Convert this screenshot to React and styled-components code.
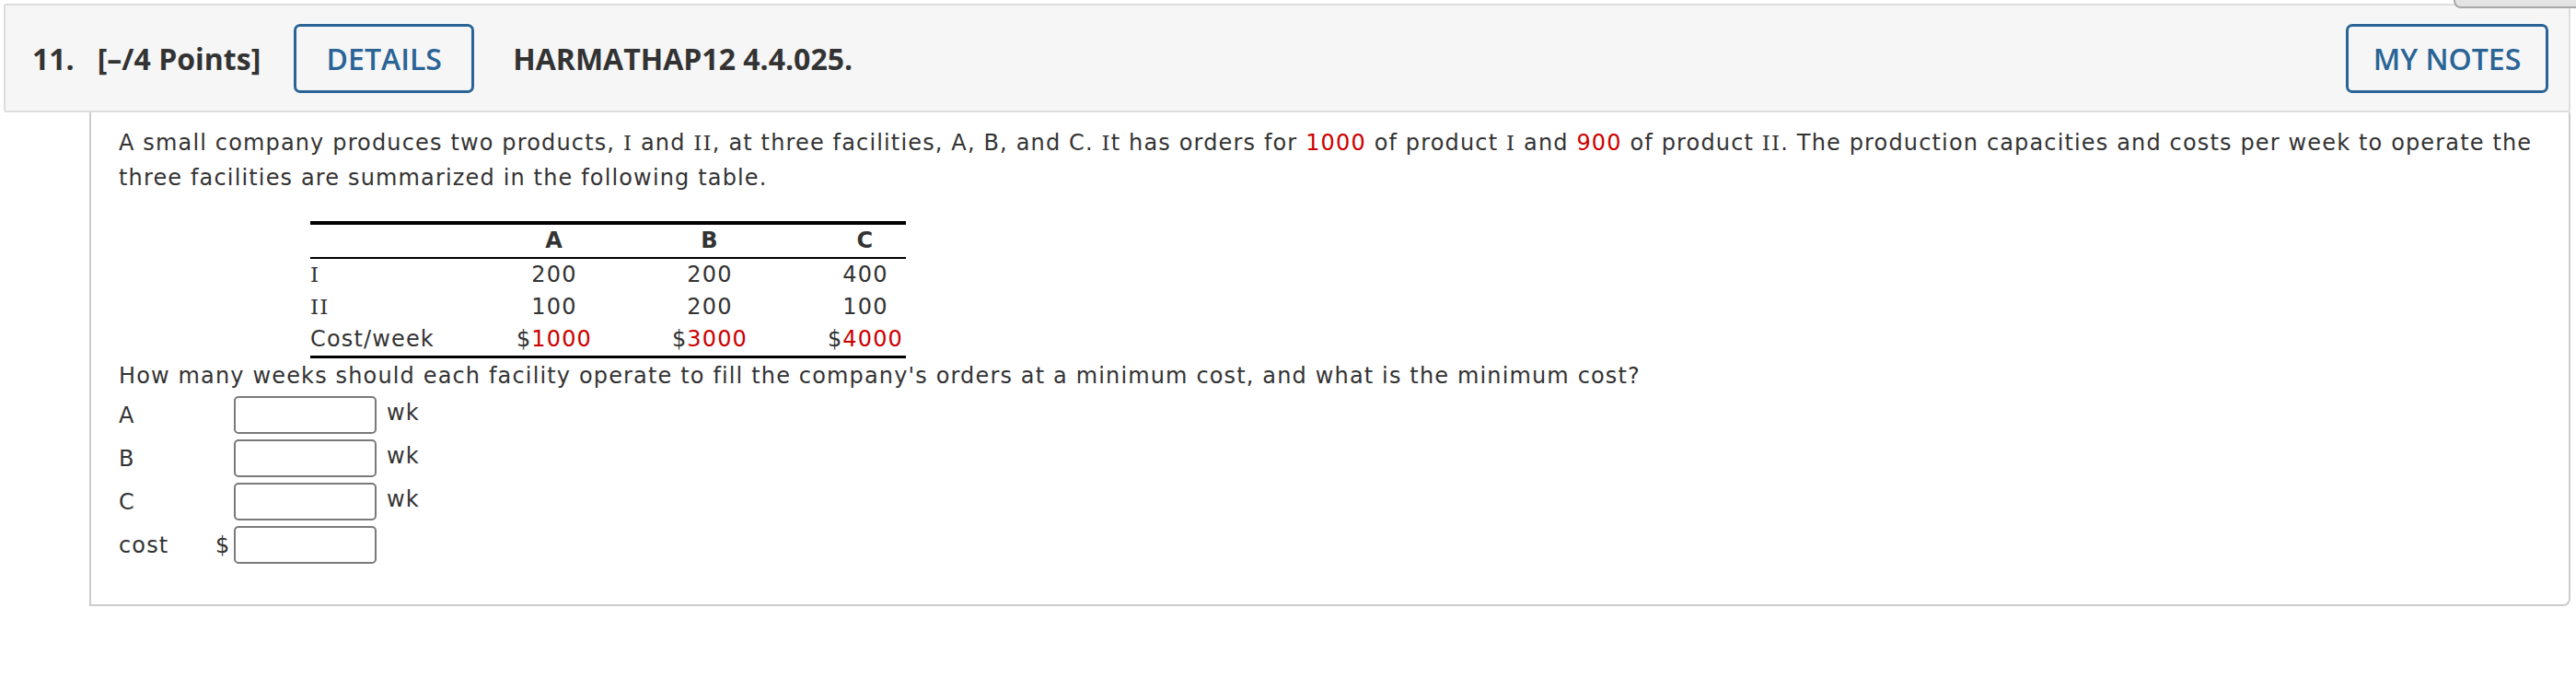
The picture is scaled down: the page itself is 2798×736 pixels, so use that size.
import React from 'react';
import styled, { createGlobalStyle } from 'styled-components';

const GlobalStyle = createGlobalStyle`
  body {
    margin: 0;
    background: #ffffff;
  }
`

const Page = styled.div`
  position: relative;
  width: 2798px;
  padding: 4px 6px 0 4px;
  box-sizing: border-box;
`

const BackTab = styled.div`
  position: absolute;
  top: 0;
  right: 0;
  width: 131px;
  height: 7px;
  background: #e4e4e4;
  border-left: 2px solid #a8a8a8;
  border-bottom: 2px solid #a8a8a8;
  border-bottom-left-radius: 8px;
`

const Header = styled.div`
  display: flex;
  align-items: center;
  height: 118px;
  box-sizing: border-box;
  padding: 0 22px 0 29px;
  background: #f6f6f6;
  border: 2px solid #dddddd;
  border-radius: 3px;
  font-family: "Open Sans", "Liberation Sans", sans-serif;
  font-size: 32px;
  font-weight: 700;
  color: #333333;
`

const Points = styled.span`
  margin-left: 25px;
`

const OutlineButton = styled.div`
  display: flex;
  align-items: center;
  justify-content: center;
  height: 75px;
  box-sizing: border-box;
  width: ${p => p.$width}px;
  margin-left: ${p => p.$gap};
  border: 3px solid #2a6496;
  border-radius: 7px;
  color: #2a6496;
  font-weight: 600;
`

const Title = styled.span`
  margin-left: 42px;
`

const Panel = styled.div`
  margin-left: 93px;
  height: 536px;
  box-sizing: border-box;
  padding: 14px 30px 0 30px;
  border: 2px solid #cccccc;
  border-top: none;
  border-bottom-right-radius: 8px;
  font-family: "DejaVu Sans", Verdana, sans-serif;
  font-size: 24px;
  letter-spacing: 1.15px;
  line-height: 38px;
  color: #333333;
`

const Text = styled.p`
  margin: 0;
`

const Red = styled.span`
  color: #cc0000;
`

const Roman = styled.span`
  font-family: "DejaVu Serif", "Liberation Serif", serif;
  font-size: 23px;
  line-height: 1;
`

const Table = styled.div`
  width: 647px;
  margin: 28px 0 0 208px;
  border-top: 4px solid #000000;
  border-bottom: 3px solid #000000;
`

const Row = styled.div`
  display: grid;
  grid-template-columns: 140px repeat(3, 88px);
  column-gap: 81px;
  height: 35px;
  line-height: 35px;
  border-bottom: ${p => (p.$head ? '2px solid #000000' : 'none')};
  font-weight: ${p => (p.$head ? 700 : 400)};
`

const Cell = styled.div`
  text-align: ${p => (p.$left ? 'left' : 'center')};
  white-space: nowrap;
`

const Answers = styled.div`
  display: grid;
  grid-template-columns: 105px 20px 155px auto;
  row-gap: 6px;
  align-items: center;
  margin-top: 3px;
`

const Label = styled.span`
  line-height: 24px;
`

const Input = styled.div`
  width: 155px;
  height: 41px;
  box-sizing: border-box;
  border: 2px solid #7a7a7a;
  border-radius: 5px;
  background: #ffffff;
`

const Unit = styled.span`
  margin-left: 11px;
  line-height: 24px;
  align-self: start;
  margin-top: 6px;
`

const rows = [
  { name: 'I', v: ['200', '200', '400'] },
  { name: 'II', v: ['100', '200', '100'] },
]

const App = () => {
  return (
    <Page>
      <GlobalStyle />
      <BackTab />
      <Header>
        <span>11.</span>
        <Points>[–/4 Points]</Points>
        <OutlineButton $width={196} $gap="36px">DETAILS</OutlineButton>
        <Title>HARMATHAP12 4.4.025.</Title>
        <OutlineButton $width={220} $gap="auto">MY NOTES</OutlineButton>
      </Header>
      <Panel>
        <Text>
          A small company produces two products, <Roman>I</Roman> and <Roman>II</Roman>, at three facilities, A, B, and
          C. <Roman>I</Roman>t has orders for <Red>1000</Red> of product <Roman>I</Roman> and <Red>900</Red> of product{' '}
          <Roman>II</Roman>. The production capacities and costs per week to operate the three facilities are summarized
          in the following table.
        </Text>
        <Table>
          <Row $head>
            <Cell />
            <Cell>A</Cell>
            <Cell>B</Cell>
            <Cell>C</Cell>
          </Row>
          {rows.map(r => (
            <Row key={r.name}>
              <Cell $left><Roman>{r.name}</Roman></Cell>
              {r.v.map((x, i) => (
                <Cell key={i}>{x}</Cell>
              ))}
            </Row>
          ))}
          <Row>
            <Cell $left>Cost/week</Cell>
            <Cell>$<Red>1000</Red></Cell>
            <Cell>$<Red>3000</Red></Cell>
            <Cell>$<Red>4000</Red></Cell>
          </Row>
        </Table>
        <Text>
          How many weeks should each facility operate to fill the company's orders at a minimum cost, and what is the
          minimum cost?
        </Text>
        <Answers>
          {['A', 'B', 'C'].map(k => (
            <React.Fragment key={k}>
              <Label>{k}</Label>
              <span />
              <Input />
              <Unit>wk</Unit>
            </React.Fragment>
          ))}
          <Label>cost</Label>
          <Label>$</Label>
          <Input />
          <span />
        </Answers>
      </Panel>
    </Page>
  )
}

export default App;
